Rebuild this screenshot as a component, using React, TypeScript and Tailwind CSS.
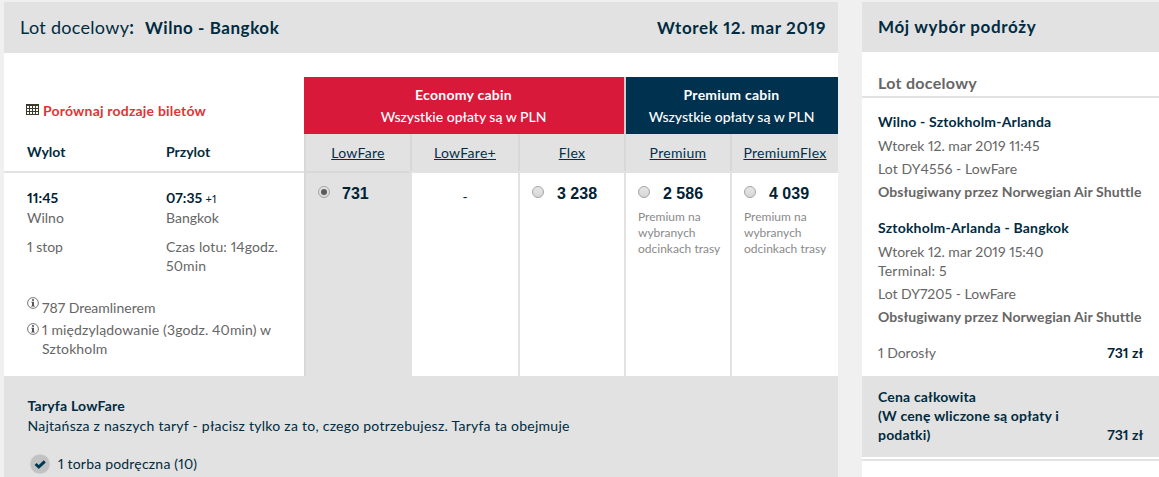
import React from 'react';

interface FareColumn {
  name: string;
  price: string | null;
  selected?: boolean;
  note?: string;
  widthClass: string;
}

const NOTE = 'Premium na wybranych odcinkach trasy';

const fares: FareColumn[] = [
  { name: 'LowFare', price: '731', selected: true, widthClass: 'w-[106px]' },
  { name: 'LowFare+', price: null, widthClass: 'w-[108px]' },
  { name: 'Flex', price: '3 238', widthClass: 'w-[106px]' },
  { name: 'Premium', price: '2 586', note: NOTE, widthClass: 'w-[106px]' },
  { name: 'PremiumFlex', price: '4 039', note: NOTE, widthClass: 'w-[108px]' },
];

const GridIcon = () => (
  <svg width="13" height="11" viewBox="0 0 13 11" className="-mt-1 shrink-0" shapeRendering="crispEdges">
    <rect width="13" height="11" fill="#3b3a2c" />
    {[2, 5, 8].map((y) =>
      [1, 4, 7, 10].map((x) => <rect key={`${x}-${y}`} x={x} y={y} width="2" height="2" fill="#fff" />)
    )}
  </svg>
);

const InfoIcon = () => (
  <svg width="12" height="12" viewBox="0 0 12 12" className="shrink-0">
    <circle cx="6" cy="6" r="5.4" fill="none" stroke="#666" strokeWidth="0.9" />
    <rect x="5" y="2.2" width="2" height="1.6" fill="#555" />
    <path d="M4.2 4.8H7v4h.9v.8H4.1v-.8H5V5.6h-.8z" fill="#555" />
  </svg>
);

const CheckIcon = () => (
  <svg width="20" height="20" viewBox="0 0 20 20" className="shrink-0">
    <circle cx="10" cy="10" r="9.8" fill="#c2c2c2" />
    <path d="M5.6 10l3.2 3 6-5.6" fill="none" stroke="#003a52" strokeWidth="3" />
  </svg>
);

const Radio = ({ checked }: { checked?: boolean }) => (
  <svg width="12" height="12" viewBox="0 0 12 12" className="shrink-0">
    <defs>
      <linearGradient id="radio" x1="0" y1="0" x2="0" y2="1">
        <stop offset="0" stopColor="#e6e6e6" />
        <stop offset="1" stopColor="#d6d6d6" />
      </linearGradient>
    </defs>
    <circle cx="6" cy="6" r="5.5" fill="url(#radio)" stroke="#a5a5a5" />
    {checked && <circle cx="6" cy="6" r="3" fill="#5b5b5b" />}
  </svg>
);

const FareCell = ({ fare }: { fare: FareColumn }) => (
  <div className={`${fare.widthClass} flex shrink-0 flex-col`}>
    <div className="h-[37px] border-l-2 border-[#d8d8d8] bg-[#e2e2e2] text-center leading-[38px] tracking-[0.3px] text-[#003049]">
      <a className="underline underline-offset-1">{fare.name}</a>
    </div>
    <div className={`h-0.5 ${fare.selected ? 'bg-[#d8d8d8]' : 'bg-[#e2e2e2]'}`} />
    <div
      className={`h-[203px] border-l-2 ${fare.selected ? 'border-[#d8d8d8] bg-[#e2e2e2]' : 'border-[#e2e2e2]'} pl-3 pt-3`}
    >
      {fare.price ? (
        <div className="flex h-[18px]">
          <div className="pt-px"><Radio checked={fare.selected} /></div>
          <span className={`${fare.selected ? 'ml-3' : 'ml-[13px]'} font-['Liberation_Sans',sans-serif] text-base leading-[18px] font-bold text-[#002233]`}>
            {fare.price}
          </span>
        </div>
      ) : (
        <div className="pr-3 pt-0.5 text-center leading-5 text-[#002233]">-</div>
      )}
      {fare.note && (
        <p className="mt-[6px] w-[88px] text-xs leading-4 text-[#8a8a8a]">{fare.note}</p>
      )}
    </div>
  </div>
);

const Flights = () => (
  <main className="h-[475px] w-[834px] shrink-0 bg-white">
    <header className="flex h-[51px] items-center justify-between bg-[#e2e2e2] pl-4 pr-3 text-[17px] leading-[51px] text-[#002b40]">
      <div className="flex">
        <span className="w-[115px] text-lg leading-[51px] tracking-[0.3px]">Lot docelowy<b>:</b></span>
        <span className="ml-2.5 font-bold tracking-[0.55px]">Wilno - Bangkok</span>
      </div>
      <span className="font-bold tracking-[0.62px]">Wtorek 12. mar 2019</span>
    </header>

    <div className="flex h-[323px] pt-6">
      <section className="w-[300px] shrink-0">
        <div className="flex h-[94px] flex-col pl-[22px]">
          <div className="mt-6 flex h-5 items-center">
            <GridIcon />
            <span className="ml-1 font-bold leading-5 tracking-[0.2px] text-[#e03434]">Porównaj rodzaje biletów</span>
          </div>
          <div className="mt-[21px] flex pl-px font-bold leading-5 text-[#002b40]">
            <span className="w-[139px]">Wylot</span>
            <span>Przylot</span>
          </div>
        </div>
        <div className="h-0.5 bg-[#e2e2e2]" />
        <div className="flex pl-[23px] pt-[15px] text-[#666]">
          <div className="w-[139px]">
            <div className="font-bold leading-5 text-[#002233]">11:45</div>
            <div className="leading-5">Wilno</div>
            <div className="mt-[9px] leading-5">1 stop</div>
          </div>
          <div className="w-[130px]">
            <div className="h-5 font-bold leading-5 text-[#002233]">
              07:35 <span className="text-[11px] leading-none font-normal">+1</span>
            </div>
            <div className="leading-5">Bangkok</div>
            <div className="mt-[9px] leading-[19px] tracking-[0.12px]">Czas lotu: 14godz.<br />50min</div>
          </div>
        </div>
        <div className="mt-[22px] pl-[23px] text-[#666]">
          <div className="flex">
            <InfoIcon />
            <span className="ml-[3px] pt-px leading-5">787 Dreamlinerem</span>
          </div>
          <div className="mt-0.5 flex">
            <div className="pt-[3px]"><InfoIcon /></div>
            <span className="ml-[3px] leading-[19px] tracking-[0.13px]">1 międzylądowanie (3godz. 40min) w<br />Sztokholm</span>
          </div>
        </div>
      </section>

      <section className="w-[534px] shrink-0">
        <div className="flex h-[57px] text-center leading-[22px] text-white">
          <div className="w-80 bg-[#d81939] pt-[7px] pr-px">
            <div className="font-bold tracking-[0.25px]">Economy cabin</div>
            <div className="font-medium">Wszystkie opłaty są w PLN</div>
          </div>
          <div className="w-[214px] border-l-2 border-[#cfcfcf] bg-[#003250] pt-[7px] pr-px">
            <div className="font-bold tracking-[0.25px]">Premium cabin</div>
            <div className="font-medium">Wszystkie opłaty są w PLN</div>
          </div>
        </div>
        <div className="flex">
          {fares.map((fare) => <FareCell key={fare.name} fare={fare} />)}
        </div>
      </section>
    </div>

    <section className="h-[101px] bg-[#e2e2e2] pl-[23.5px] pt-5 leading-5 text-[#002b40]">
      <div className="font-bold tracking-[0.2px]">Taryfa LowFare</div>
      <div className="tracking-[0.26px]">Najtańsza z naszych taryf - płacisz tylko za to, czego potrzebujesz. Taryfa ta obejmuje</div>
      <div className="mt-[18px] flex pl-[2.5px]">
        <CheckIcon />
        <span className="ml-2 tracking-[0.2px]">1 torba podręczna (10)</span>
      </div>
    </section>
  </main>
);

const Sidebar = () => (
  <aside className="ml-6 h-[475px] w-[297px] shrink-0 bg-white text-[#666]">
    <h2 className="h-[50px] bg-[#e2e2e2] pl-4 text-[17px] leading-[50px] font-bold tracking-[0.65px] text-[#002b40]">Mój wybór podróży</h2>
    <h3 className="h-11 pl-4 pt-[21px] text-base leading-5 font-bold tracking-[0.3px]">Lot docelowy</h3>
    <div className="h-0.5 bg-[#e2e2e2]" />
    <div className="h-[278px] px-4 pt-[14px]">
      <div className="font-bold leading-5 tracking-[0.17px] text-[#002b40]">Wilno - Sztokholm-Arlanda</div>
      <div className="mt-1 leading-5">Wtorek 12. mar 2019 11:45</div>
      <div className="mt-[3px] leading-5 tracking-[0.1px]">Lot DY4556 - LowFare</div>
      <div className="mt-[3px] font-bold leading-5 tracking-[0.1px]">Obsługiwany przez Norwegian Air Shuttle</div>
      <div className="mt-4 font-bold leading-5 tracking-[0.2px] text-[#002b40]">Sztokholm-Arlanda - Bangkok</div>
      <div className="mt-1 leading-[19px]">Wtorek 12. mar 2019 15:40</div>
      <div className="leading-[19px] tracking-[0.2px]">Terminal: 5</div>
      <div className="mt-1 leading-5">Lot DY7205 - LowFare</div>
      <div className="mt-[3px] font-bold leading-5 tracking-[0.1px]">Obsługiwany przez Norwegian Air Shuttle</div>
      <div className="mt-4 flex justify-between leading-5">
        <span>1 Dorosły</span>
        <span className="font-bold text-[#002233]">731 zł</span>
      </div>
    </div>
    <div className="flex h-[81px] items-end justify-between bg-[#e2e2e2] px-4 pb-[13px] font-bold leading-[19px] text-[#002b40]">
      <div className="tracking-[0.18px]">
        Cena całkowita<br />
        (W cenę wliczone są opłaty i<br />
        podatki)
      </div>
      <span>731 zł</span>
    </div>
    <div className="mt-0.5 h-0.5 bg-[#e2e2e2]" />
  </aside>
);

const App: React.FC = () => (
  <div className="flex h-[477px] w-[1159px] overflow-hidden bg-[#f0f0f0] pl-1 pt-0.5 font-[Lato,sans-serif] text-sm whitespace-nowrap proportional-nums [&_p]:whitespace-normal">
    <Flights />
    <Sidebar />
  </div>
);

export default App;
